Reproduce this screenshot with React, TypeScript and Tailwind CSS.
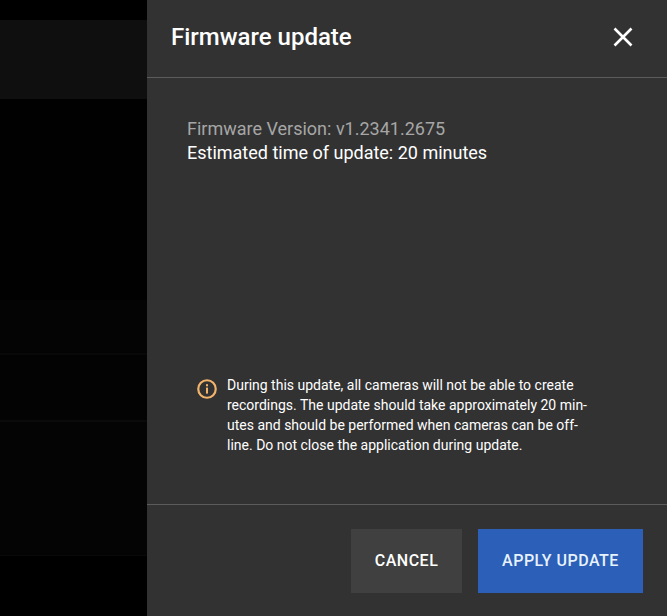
import React from "react";

function Backdrop() {
  return (
    <div className="flex h-[616px] w-[147px] shrink-0 flex-col bg-black">
      <div className="h-[20px] bg-black" />
      <div className="h-[79px] bg-[#0f0f0f]" />
      <div className="h-[201px] bg-[#010101]" />
      <div className="h-[55px] border-b-2 border-[#080808] bg-[#040404]" />
      <div className="h-[67px] border-b-2 border-[#0a0a0a] bg-[#030303]" />
      <div className="h-[134px] border-b border-[#090909] bg-[#040404]" />
      <div className="flex-1 bg-black" />
    </div>
  );
}

export default function App() {
  return (
    <div
      className="flex h-[616px] w-[667px] overflow-hidden bg-black"
      style={{ fontFamily: "Roboto, sans-serif" }}
    >
      <Backdrop />
      <div className="flex min-w-0 flex-1 flex-col bg-[#323232]">
        <header className="flex h-[78px] shrink-0 items-center justify-between border-b border-[#5c5c5c] pb-1 pl-6 pr-8">
          <h1 className="text-2xl font-medium leading-none text-white">Firmware update</h1>
          <button aria-label="Close" className="flex h-6 w-6 items-center justify-center text-white">
            <svg width="24" height="24" viewBox="0 0 24 24" fill="none" stroke="currentColor" strokeWidth="2.6">
              <path d="M3.5 3.5 20.5 20.5M20.5 3.5 3.5 20.5" />
            </svg>
          </button>
        </header>
        <main className="flex min-h-0 flex-1 flex-col justify-between pb-[49px] pl-10 pr-6 pt-[39px]">
          <div className="text-lg leading-6">
            <p className="text-[#a6a6a6]">Firmware Version: v1.2341.2675</p>
            <p className="text-white">Estimated time of update: 20 minutes</p>
          </div>
          <div className="flex gap-[10px] pl-[10px]">
            <svg className="mt-[4px] shrink-0" width="20" height="20" viewBox="0 0 20 20" fill="none">
              <circle cx="10" cy="10" r="8.75" stroke="#f2b36b" strokeWidth="2.2" />
              <rect x="9" y="8.6" width="2" height="6" fill="#f2b36b" />
              <rect x="9" y="5.2" width="2" height="2.1" fill="#f2b36b" />
            </svg>
            <p className="w-[365px] text-sm leading-5 text-white">
              During this update, all cameras will not be able to create recordings. The update should take approximately 20 min-
              <br />
              utes and should be performed when cameras can be off-
              <br />
              line. Do not close the application during update.
            </p>
          </div>
        </main>
        <footer className="flex h-[112px] shrink-0 items-start justify-end gap-4 border-t border-[#5c5c5c] pr-6 pt-6">
          <button className="h-16 w-[111px] bg-[#404040] text-base font-medium tracking-[0.5px] text-white">CANCEL</button>
          <button className="h-16 w-[165px] bg-[#2b5fb8] text-base font-medium tracking-[0.5px] text-[#e8f2fc]">APPLY UPDATE</button>
        </footer>
      </div>
    </div>
  );
}
